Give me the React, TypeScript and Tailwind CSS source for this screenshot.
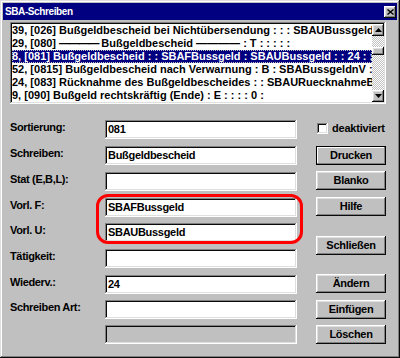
import React from "react";

const raised =
  "shadow-[inset_-1px_-1px_#0a0a0a,inset_1px_1px_#ffffff,inset_-2px_-2px_#808080,inset_2px_2px_#dfdfdf]";
const sunken =
  "shadow-[inset_-1px_-1px_#ffffff,inset_1px_1px_#808080,inset_-2px_-2px_#dfdfdf,inset_2px_2px_#0a0a0a]";

const listRows: React.ReactNode[] = [
  "39, [026] Bußgeldbescheid bei Nichtübersendung : : : SBAUBussgeld : : 28 : :",
  <>
    29, [080] <span className="tracking-[-1.2px]">————</span> Bußgeldbescheid ———— : T : : : : :
  </>,
  "8, [081] Bußgeldbescheid : : SBAFBussgeld : SBAUBussgeld : : 24 : :",
  "52, [0815] Bußgeldbescheid nach Verwarnung : B : SBABussgeldnV : SBAUBussgeldnV",
  "24, [083] Rücknahme des Bußgeldbescheides : : SBAURuecknahmeBussgeld",
  "9, [090] Bußgeld rechtskräftig (Ende) : E : : : : 0 :",
];

// label, value, row height (distance to next field)
const fields: { label: string; value?: string; h: string; disabled?: boolean }[] = [
  { label: "Sortierung:", value: "081", h: "h-[26px]" },
  { label: "Schreiben:", value: "Bußgeldbescheid", h: "h-[26px]" },
  { label: "Stat (E,B,L):", h: "h-[26px]" },
  { label: "Vorl. F:", value: "SBAFBussgeld", h: "h-[25px]" },
  { label: "Vorl. U:", value: "SBAUBussgeld", h: "h-[26px]" },
  { label: "Tätigkeit:", h: "h-[26px]" },
  { label: "Wiederv.:", value: "24", h: "h-[25px]" },
  { label: "Schreiben Art:", h: "h-[25px]" },
  { label: "", h: "h-[19px]", disabled: true },
];

const Arrow = ({ down }: { down?: boolean }) => (
  <div className={`h-[12px] bg-[#c0c0c0] flex items-center justify-center ${raised}`}>
    <svg width="7" height="4" viewBox="0 0 7 4">
      {down ? <polygon points="0,0 7,0 3.5,4" fill="#000" /> : <polygon points="0,4 7,4 3.5,0" fill="#000" />}
    </svg>
  </div>
);

const Button = ({ label, mt, isDefault }: { label: string; mt: string; isDefault?: boolean }) => (
  <div
    className={`${mt} h-[19px] w-[70px] flex items-center justify-center bg-[#c0c0c0] text-[11px] font-bold tracking-[-0.3px] text-black ${
      isDefault
        ? "shadow-[inset_0_0_0_1px_#000000,inset_-2px_-2px_#808080,inset_2px_2px_#ffffff]"
        : raised
    }`}
  >
    {label}
  </div>
);

export default function App() {
  return (
    <div
      className={`relative w-[400px] h-[358px] bg-[#c0c0c0] p-[3px] font-['Liberation_Sans',Arial,sans-serif] text-black shadow-[inset_-1px_-1px_#0a0a0a,inset_1px_1px_#dfdfdf,inset_-2px_-2px_#808080,inset_2px_2px_#ffffff]`}
    >
      {/* title bar */}
      <div className="h-[17px] bg-[#000080] flex items-center justify-between pl-[2px] pr-[1px]">
        <span className="text-white text-[10px] font-bold tracking-[-0.4px] leading-[17px]">SBA-Schreiben</span>
        <div className={`w-[12px] h-[12px] bg-[#c0c0c0] flex items-center justify-center ${raised}`}>
          <svg width="7" height="6" viewBox="0 0 7 6">
            <path d="M0.5 0.5 L6.5 5.5 M6.5 0.5 L0.5 5.5" stroke="#000" strokeWidth="1.4" />
          </svg>
        </div>
      </div>

      {/* list box */}
      <div className={`ml-[7px] mt-[2px] w-[376px] h-[82px] p-[2px] bg-white flex ${sunken}`}>
        <div className="flex-1 overflow-hidden text-[11px] font-bold">
          {listRows.map((row, i) => (
            <div
              key={i}
              className={`h-[13px] leading-[13px] whitespace-nowrap pl-[0px] ${
                i === 2 ? "bg-[#000080] text-white outline-1 outline-dotted outline-[#c0c0c0] -outline-offset-1" : ""
              }`}
            >
              {row}
            </div>
          ))}
        </div>
        <div className="w-[12px] flex flex-col">
          <Arrow />
          <div className="flex-1 bg-[repeating-conic-gradient(#c0c0c0_0_25%,#ffffff_0_50%)] bg-[length:2px_2px]">
            <div className={`mt-[11px] h-[8px] bg-[#c0c0c0] ${raised}`} />
          </div>
          <Arrow down />
        </div>
      </div>

      {/* form */}
      <div className="flex pl-[7px]">
        <div className="w-[287px] flex flex-col pt-[16px]">
          {fields.map((f, i) => (
            <div key={i} className={`${f.h} flex items-start`}>
              <div className="w-[95px] pt-[1px] text-[11px] font-bold leading-[13px] tracking-[-0.35px] whitespace-nowrap">
                {f.label}
              </div>
              <div
                className={`w-[192px] h-[19px] p-[2px] pl-[3px] text-[11px] font-bold leading-[15px] tracking-[-0.3px] ${
                  f.disabled ? "bg-[#c0c0c0]" : "bg-white"
                } ${sunken}`}
              >
                {f.value}
              </div>
            </div>
          ))}
        </div>

        <div className="ml-[19px] w-[70px] flex flex-col">
          <div className="mt-[19px] h-[11px] flex items-center gap-[4px] pl-[1px]">
            <div className={`w-[11px] h-[11px] bg-white ${sunken}`} />
            <span className="text-[11px] font-bold leading-[11px] tracking-[-0.2px]">deaktiviert</span>
          </div>
          <Button label="Drucken" mt="mt-[12px]" isDefault />
          <Button label="Blanko" mt="mt-[6px]" />
          <Button label="Hilfe" mt="mt-[7px]" />
          <Button label="Schließen" mt="mt-[20px]" />
          <Button label="Ändern" mt="mt-[19px]" />
          <Button label="Einfügen" mt="mt-[7px]" />
          <Button label="Löschen" mt="mt-[6px]" />
        </div>
      </div>

      {/* red annotation around Vorl. F / Vorl. U */}
      <div className="absolute left-[96px] top-[194px] w-[207px] h-[50px] border-[3px] border-[#ff0000] rounded-[12px] pointer-events-none" />
    </div>
  );
}
